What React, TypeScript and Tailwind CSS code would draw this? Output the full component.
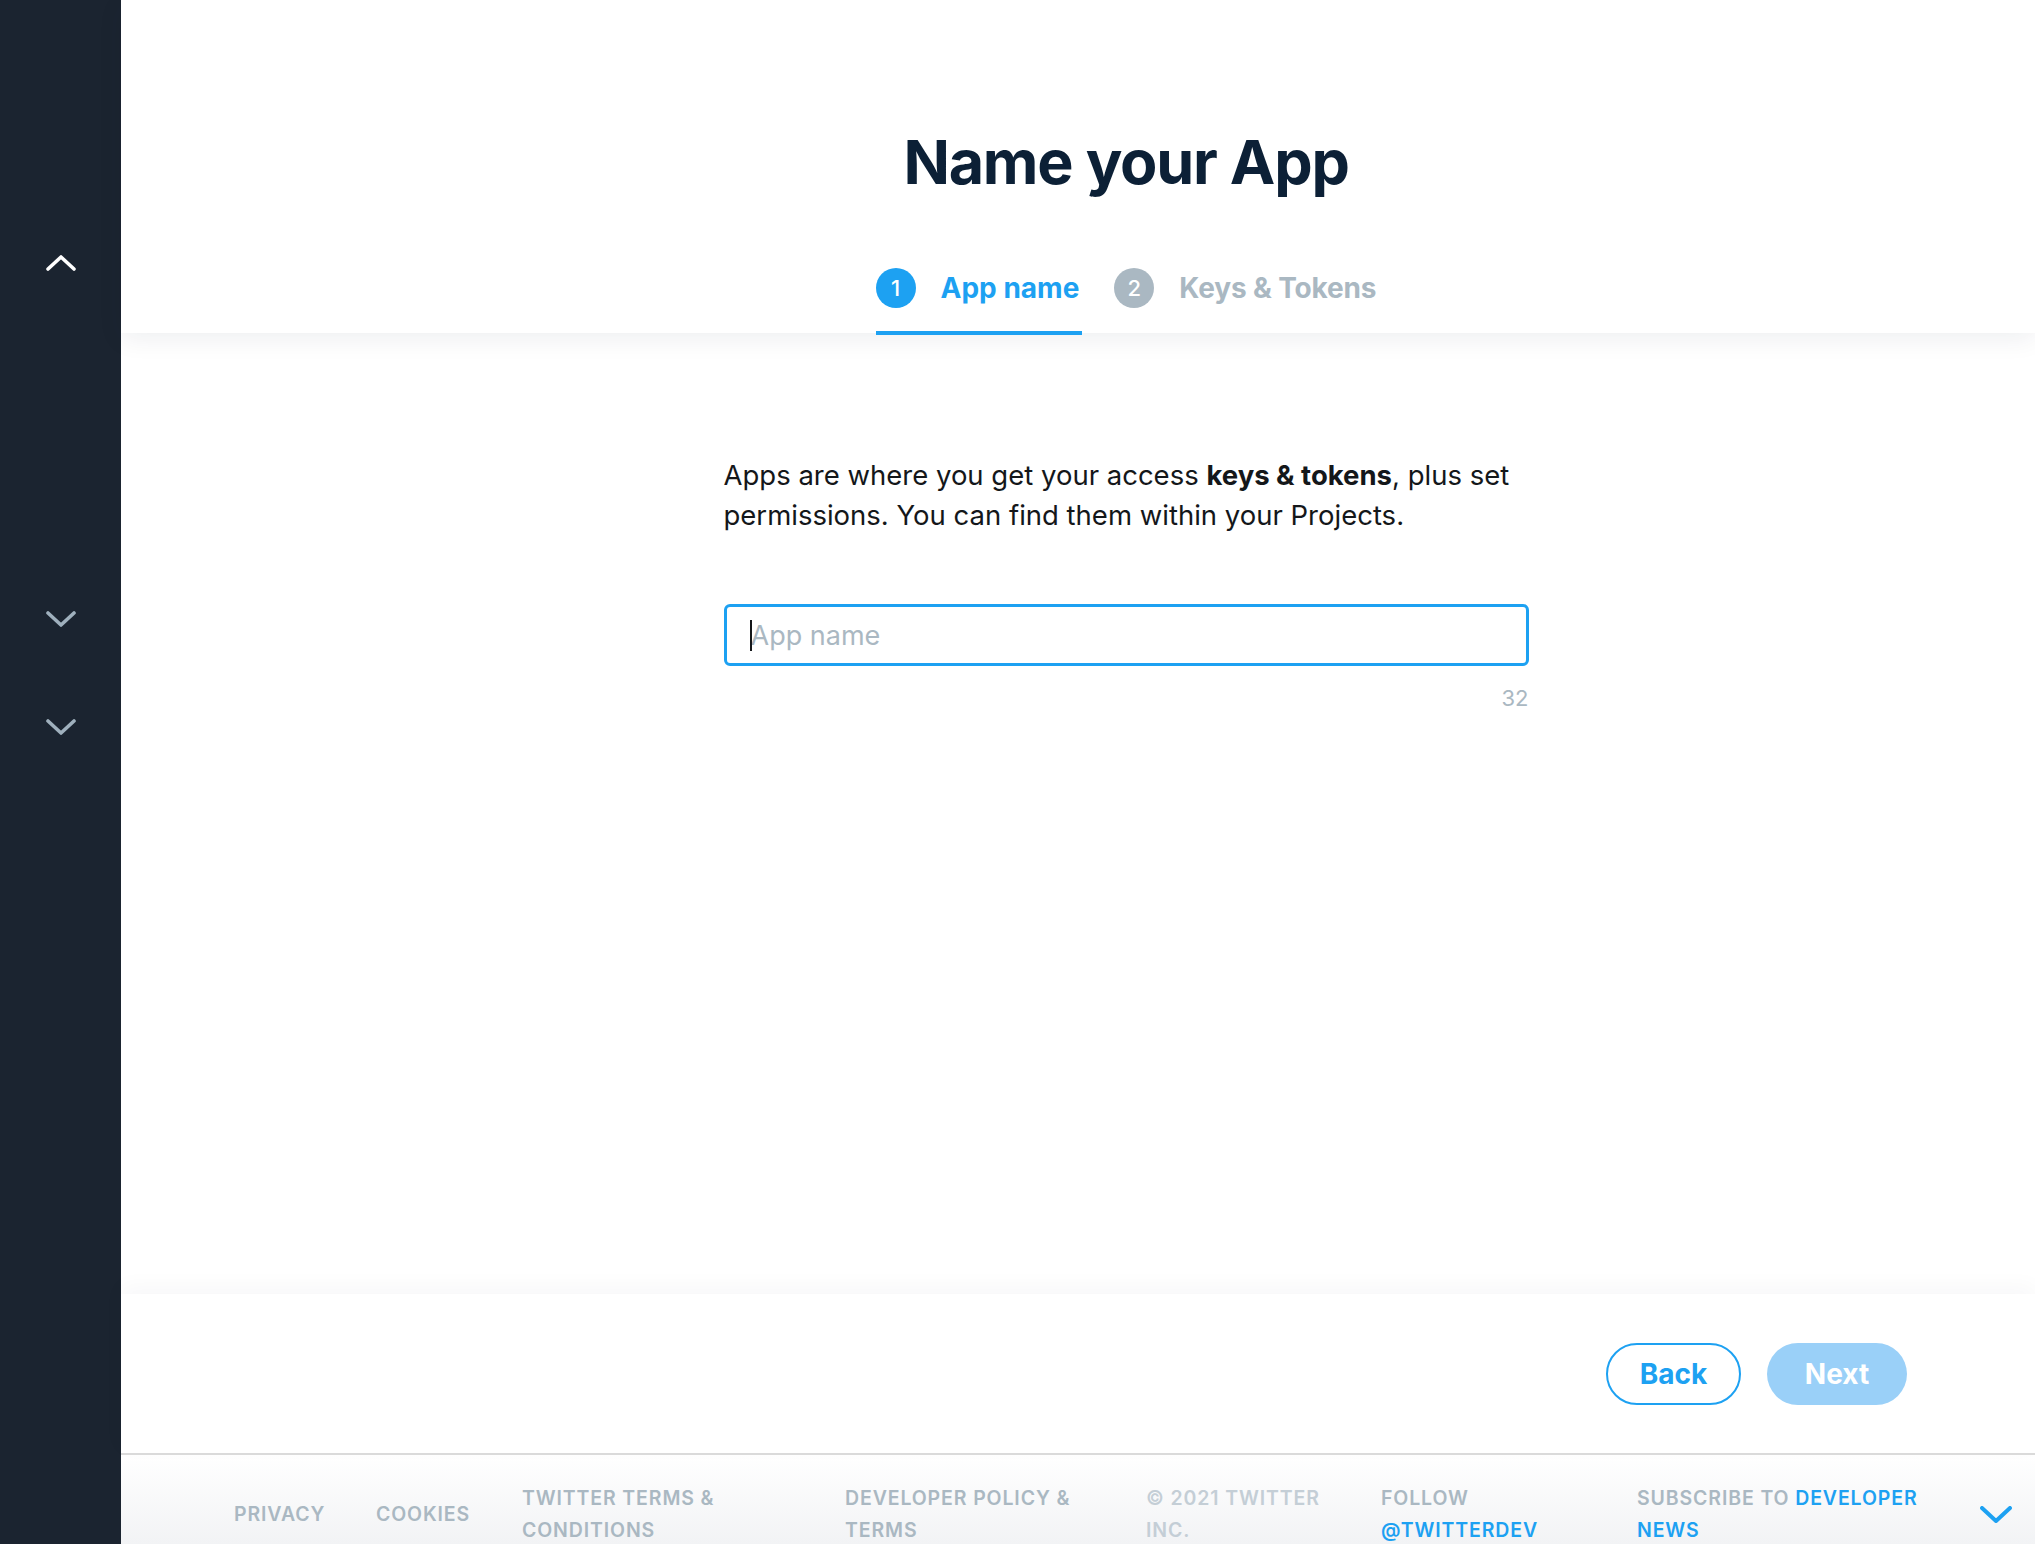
import React from "react";

function Chevron({ dir, color, w = 28, h = 14, sw = 3 }: { dir: "up" | "down"; color: string; w?: number; h?: number; sw?: number }) {
  const pts = dir === "up" ? `2,${h - 2} ${w / 2},2 ${w - 2},${h - 2}` : `2,2 ${w / 2},${h - 2} ${w - 2},2`;
  return (
    <svg width={w} height={h} viewBox={`0 0 ${w} ${h}`} fill="none">
      <polyline points={pts} stroke={color} strokeWidth={sw} strokeLinecap="round" strokeLinejoin="round" />
    </svg>
  );
}

export default function App() {
  const font = { fontFamily: "Inter, 'Noto Sans', 'Liberation Sans', sans-serif" };
  return (
    <div className="flex h-screen w-full overflow-hidden bg-white" style={font}>
      {/* Sidebar */}
      <aside className="w-[121px] shrink-0 bg-[#1b2430] flex flex-col items-center">
        <div className="mt-[255px] flex h-[16px] items-center justify-center">
          <Chevron dir="up" color="#ffffff" w={30} h={16} sw={3.6} />
        </div>
        <div className="mt-[340px] flex h-[16px] items-center justify-center">
          <Chevron dir="down" color="#9fb0bd" w={30} h={16} sw={3.6} />
        </div>
        <div className="mt-[92px] flex h-[16px] items-center justify-center">
          <Chevron dir="down" color="#9fb0bd" w={30} h={16} sw={3.6} />
        </div>
      </aside>

      {/* Main */}
      <main className="flex min-w-0 flex-1 flex-col">
        {/* Header */}
        <header className="relative z-10 flex h-[333px] shrink-0 flex-col items-center bg-white pl-[96px] shadow-[0_6px_24px_rgba(20,30,50,0.07)]">
          <h1 className="mt-[132px] text-[61px] font-bold leading-none tracking-[-0.02em] text-[#0c2036]">Name your App</h1>
          <nav className="mt-[74px] flex gap-[32px]">
            <div className="flex items-center gap-[25px] border-b-4 border-[#1da1f2] pb-[22px] pr-[3px]">
              <span className="flex h-[40px] w-[40px] items-center justify-center rounded-full bg-[#1da1f2] text-[22px] font-medium text-white">1</span>
              <span className="text-[28px] font-bold text-[#1da1f2]">App name</span>
            </div>
            <div className="flex items-center gap-[25px] border-b-4 border-transparent pb-[22px]">
              <span className="flex h-[40px] w-[40px] items-center justify-center rounded-full bg-[#aab8c2] text-[22px] font-medium text-white">2</span>
              <span className="text-[28px] font-bold tracking-[-0.005em] text-[#aab8c2]">Keys &amp; Tokens</span>
            </div>
          </nav>
        </header>

        {/* Body */}
        <section className="flex min-h-0 flex-1 justify-center bg-white pl-[96px]">
          <div className="w-[805px] pt-[122px]">
            <p className="text-[27.5px] leading-[40px] text-[#14171a]">
              Apps are where you get your access <b className="font-bold">keys &amp; tokens</b>, plus set permissions. You can find them within your Projects.
            </p>
            <div className="relative mt-[69px]">
              <input
                readOnly
                placeholder="App name"
                className="h-[62px] w-full rounded-[6px] border-[3px] border-[#1da1f2] bg-white pl-[24px] text-[27px] text-[#14171a] outline-none placeholder:text-[#aab8c2]"
                style={font}
              />
              <span className="absolute left-[26px] top-[16px] h-[31px] w-[2px] bg-[#14171a]" />
            </div>
            <div className="mt-[17px] text-right text-[22px] leading-[30px] text-[#aab8c2]">32</div>
          </div>
        </section>

        {/* Action bar */}
        <div className="relative z-10 flex h-[161px] shrink-0 items-center justify-end gap-[26px] border-b-2 border-[#dadada] bg-white pr-[128px] shadow-[0_-8px_20px_rgba(20,30,60,0.03)]">
          <button className="h-[62px] w-[135px] rounded-full border-2 border-[#1da1f2] bg-white text-[28px] font-bold text-[#1da1f2]">Back</button>
          <button className="h-[62px] w-[140px] rounded-full bg-[#9ad0f8] text-[28px] font-bold text-white">Next</button>
        </div>

        {/* Footer */}
        <footer className="flex h-[89px] shrink-0 items-start bg-gradient-to-b from-white to-[#f2f3f5] pl-[113px] pr-[23px] pt-[27px] text-[19.5px] font-semibold uppercase leading-[32px] tracking-[0.045em] text-[#aab8c2]">
          <div className="flex h-[64px] w-full items-center">
            <div className="w-[142px] shrink-0">Privacy</div>
            <div className="w-[146px] shrink-0">Cookies</div>
            <div className="w-[323px] shrink-0"><div className="max-w-[265px]">Twitter Terms &amp; Conditions</div></div>
            <div className="w-[301px] shrink-0"><div className="max-w-[250px]">Developer Policy &amp; Terms</div></div>
            <div className="w-[235px] shrink-0 text-[#c4ced6]"><div className="max-w-[190px]">© 2021 Twitter Inc.</div></div>
            <div className="w-[256px] shrink-0"><div className="max-w-[200px]">Follow <span className="text-[#1da1f2]">@twitterdev</span></div></div>
            <div className="shrink-0"><div className="max-w-[310px]">Subscribe to <span className="text-[#1da1f2]">Developer News</span></div></div>
            <div className="ml-auto flex items-center">
              <Chevron dir="down" color="#1da1f2" w={32} h={17} sw={4} />
            </div>
          </div>
        </footer>
      </main>
    </div>
  );
}
